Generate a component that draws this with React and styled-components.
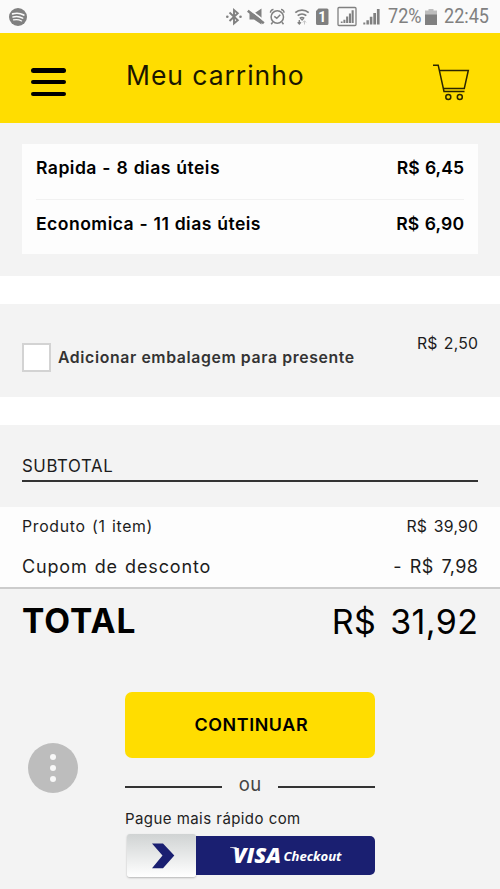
import React from 'react';
import styled, { createGlobalStyle } from 'styled-components';

const App = () => {
    return (
        <>
            <GlobalStyle />
            <Screen>
                <StatusBar />
                <Header>
                    <MenuButton aria-label="Menu">
                        <span />
                        <span />
                        <span />
                    </MenuButton>
                    <Title>Meu carrinho</Title>
                    <CartIcon />
                </Header>

                <ShippingSection>
                    <ShippingCard>
                        <ShippingRow>
                            <Text $size={17.6} $weight={600} $spacing={0.45} $word={0.6}>Rapida - 8 dias úteis</Text>
                            <Text $size={17.6} $weight={600} $spacing={0} $word={0.8}>R$ 6,45</Text>
                        </ShippingRow>
                        <ShippingRow>
                            <Text $size={17.6} $weight={600} $spacing={0.45} $word={0.5}>Economica - 11 dias úteis</Text>
                            <Text $size={17.6} $weight={600} $spacing={0.1} $word={0.8}>R$ 6,90</Text>
                        </ShippingRow>
                    </ShippingCard>
                </ShippingSection>

                <GiftSection>
                    <GiftLabel>
                        <Checkbox />
                        <Text $size={15.8} $weight={600} $spacing={0.62} $color="#333">Adicionar embalagem para presente</Text>
                    </GiftLabel>
                    <GiftPrice>
                        <Text $size={15.8} $spacing={0.2} $word={1.5} $color="#1c1c1c">R$ 2,50</Text>
                    </GiftPrice>
                </GiftSection>

                <SubtotalHead>
                    <SubtotalTitle>
                        <Text $size={16.8} $spacing={0.6} $color="#1c1c1c">SUBTOTAL</Text>
                    </SubtotalTitle>
                </SubtotalHead>
                <SubtotalList>
                    <Line>
                        <Text $size={15.8} $spacing={0.7} $word={1.2} $color="#1c1c1c">Produto (1 item)</Text>
                        <Text $size={15.8} $spacing={0.2} $word={2} $color="#1c1c1c">R$ 39,90</Text>
                    </Line>
                    <Line>
                        <Text $size={18} $spacing={0.85} $word={1.2} $color="#1c1c1c">Cupom de desconto</Text>
                        <Text $size={18} $spacing={0.4} $word={2.4} $color="#1c1c1c">- R$ 7,98</Text>
                    </Line>
                </SubtotalList>

                <Total>
                    <Text $size={33.5} $weight={700} $spacing={1}>TOTAL</Text>
                    <Text $size={34} $spacing={0.4} $word={4}>R$ 31,92</Text>
                </Total>

                <Checkout>
                    <ContinueButton>
                        <Text $size={17.9} $weight={600} $spacing={0.6}>CONTINUAR</Text>
                    </ContinueButton>
                    <Or>
                        <Text $size={18.5} $spacing={0.6} $color="#444">ou</Text>
                    </Or>
                    <Faster>
                        <Text $size={15} $spacing={0.4} $word={0.3} $color="#222">Pague mais rápido com</Text>
                    </Faster>
                    <VisaCheckout />
                </Checkout>

                <MoreButton aria-label="Mais">
                    <span />
                    <span />
                    <span />
                </MoreButton>
            </Screen>
        </>
    )
}

const StatusBar = () => (
    <StyledStatus>
        <svg width="18" height="18" viewBox="0 0 18 18">
            <circle cx="9" cy="9" r="9" fill="#808080" />
            <g fill="none" stroke="#fafafa" strokeLinecap="round">
                <path d="M3.6 5.9c3.8-1.1 7.8-.7 11.2 1.1" strokeWidth="1.7" />
                <path d="M4 9c3.3-.9 6.7-.5 9.7 1.1" strokeWidth="1.5" />
                <path d="M4.5 11.9c2.8-.7 5.6-.4 8.1 1" strokeWidth="1.2" />
            </g>
        </svg>
        <StatusIcons />
        <StatusText $width={33}>72%</StatusText>
        <Battery />
        <StatusText $width={45}>22:45</StatusText>
    </StyledStatus>
);

const StatusIcons = () => (
    <svg width="160" height="22" viewBox="225 6 160 22" fill="none" stroke="#808080">
        <path d="M230.5 12.5l8.3 7.7-3.8 3.3v-13.5l3.8 3.3-8.3 7.7" strokeWidth="1.9" />
        <g fill="#808080" stroke="none">
            <circle cx="228.3" cy="16.7" r="1.3" />
            <circle cx="241.5" cy="16.7" r="1.3" />
            <path d="M250.5 13.5h4.5l7.5-5v16l-7.5-5h-4.5z" />
        </g>
        <path d="M249 8.3l17.5 13.5" stroke="#fafafa" strokeWidth="1.8" />
        <path d="M248.8 10.7l16 12.6" strokeWidth="2.6" />
        <g strokeWidth="1.5">
            <circle cx="278.3" cy="17" r="6.2" />
            <path d="M275.3 16.3l2.5 2 3.5-3.5M271.5 12.7a3 3 0 0 1 3-3.2M282 9.5a3 3 0 0 1 3 3.2M273.7 22.3l-1.5 2M283 22.3l1.5 2" />
        </g>
        <path d="M296.3 12.7a10 10 0 0 1 13.4 0M298.7 15.7a6.5 6.5 0 0 1 8.6 0M300.8 18.5a3.5 3.5 0 0 1 4.4 0" strokeWidth="1.8" />
        <path d="M301.3 19h3.6l-1.8 2z" fill="#808080" stroke="none" />
        <path d="M300.3 20v3.5M298.7 22.3l1.6 1.8 1.6-1.8" strokeWidth="1.3" />
        <path d="M305.5 24.5v-3.5M303.9 22.5l1.6-1.8 1.6 1.8" stroke="#c4c4c4" />
        <path d="M319.5 8.5h8.5a1.5 1.5 0 0 1 1.5 1.5v13.5a1.5 1.5 0 0 1-1.5 1.5h-9.5a1.5 1.5 0 0 1-1.5-1.5V11z" fill="#808080" stroke="none" />
        <text x="323.3" y="21.8" textAnchor="middle" fill="#fff" stroke="none" fontFamily="Roboto, sans-serif" fontWeight="700" fontSize="14">1</text>
        <rect x="339" y="7.5" width="18" height="18" rx="1" strokeWidth="1.3" />
        <g fill="#808080" stroke="none">
            <path d="M341.8 21.5h1.8v1.5h-1.8zM344.4 19.7h2v3.3h-2zM347.1 16.5h2.1v6.5h-2.1zM349.9 13.5h2.1v9.5h-2.1zM352.6 10.3h2.1v12.7h-2.1z" />
            <path d="M364.3 22.5h2v2h-2zM367.4 20.2h2.5v4.3h-2.5zM370.8 16.7h2.6v7.8h-2.6zM374.3 13h2.7v11.5h-2.7zM377.9 9h2.7v15.5h-2.7z" />
        </g>
    </svg>
);

const Battery = () => (
    <svg width="12" height="16" viewBox="0 0 12 16">
        <path d="M3.5 0h5v1.5H12V6H0V1.5h3.5z" fill="#bdbdbd" />
        <path d="M0 5.5h12V16H0z" fill="#808080" />
    </svg>
);

const CartIcon = () => (
    <StyledCart width="38" height="38" viewBox="432 63 38 38" fill="none" stroke="#2b2600" strokeWidth="1.5">
        <path d="M433 65.2h5.2l5.8 26.3h20.5" />
        <path d="M439.3 70.5h29l-4 18h-20.5" />
        <circle cx="448.3" cy="97" r="2.5" />
        <circle cx="459.8" cy="97" r="2.5" />
    </StyledCart>
);

const VisaCheckout = () => (
    <VisaButton>
        <VisaArrow>
            <svg width="23" height="26" viewBox="0 0 23 26">
                <path d="M0 .5h11L22.3 12.5 11 25.2H0l10.5-12.7z" fill="#1a1f71" />
            </svg>
        </VisaArrow>
        <VisaLabel>
            <svg width="124" height="32" viewBox="0 0 124 32" fill="#fff">
                <text x="3" y="22.5" fontFamily="Open Sans, sans-serif" fontWeight="800" fontStyle="italic" fontSize="21" textLength="48" lengthAdjust="spacingAndGlyphs">VISA</text>
                <path d="M0 7.2h6.5l1.2 3.3C5.5 8.5 3 7.9 0 7.7z" />
                <text x="53.5" y="20.5" fontFamily="Open Sans, sans-serif" fontWeight="700" fontStyle="italic" fontSize="12.5" textLength="58" lengthAdjust="spacingAndGlyphs">Checkout</text>
            </svg>
        </VisaLabel>
    </VisaButton>
);

const GlobalStyle = createGlobalStyle`
    * {
        box-sizing: border-box;
    }
    body {
        margin: 0;
        background: #f3f3f3;
        font-family: 'Inter', sans-serif;
        color: #000;
    }
    button {
        border: none;
        padding: 0;
        background: none;
        font-family: inherit;
    }
`;

const Screen = styled.div`
    position: relative;
    width: 500px;
    height: 889px;
    overflow: hidden;
    background: #fff;
    display: flex;
    flex-direction: column;
`;

const Text = styled.span`
    display: block;
    white-space: nowrap;
    font-size: ${({ $size }) => $size}px;
    font-weight: ${({ $weight }) => $weight || 400};
    letter-spacing: ${({ $spacing }) => $spacing}px;
    word-spacing: ${({ $word }) => $word || 0}px;
    margin-right: ${({ $spacing }) => -$spacing}px;
    color: ${({ $color }) => $color || '#000'};
`;

const StyledStatus = styled.div`
    height: 33px;
    flex: none;
    background: #fafafa;
    display: flex;
    align-items: center;
    padding: 0 11px 0 9px;

    > svg:nth-child(2) {
        margin-left: auto;
        margin-right: 4px;
    }
    > svg:nth-child(4) {
        margin: 0 7px 0 4px;
    }
`;

const StatusText = styled.span`
    width: ${({ $width }) => $width}px;
    font-family: 'Roboto', sans-serif;
    font-size: 21px;
    line-height: 33px;
    color: #808080;
    white-space: nowrap;
    transform: scaleX(0.86);
    transform-origin: left;
`;

const Header = styled.header`
    height: 90px;
    flex: none;
    background: #ffdd00;
    display: flex;
    align-items: flex-start;
    padding: 30px 30px 0 31px;
`;

const MenuButton = styled.button`
    width: 35px;
    height: 28px;
    margin-top: 5px;
    display: flex;
    flex-direction: column;
    justify-content: space-between;

    span {
        height: 4.5px;
        border-radius: 3px;
        background: #000;
    }
`;

const Title = styled.h1`
    margin: 0 0 0 60px;
    flex: 1;
    font-size: 26.5px;
    font-weight: 400;
    line-height: 24px;
    letter-spacing: 0.95px;
    color: #1a1600;
`;

const StyledCart = styled.svg`
    flex: none;
`;

const ShippingSection = styled.section`
    height: 153px;
    flex: none;
    padding: 21px 22px 22px;
    background: #f3f3f3;
`;

const ShippingCard = styled.div`
    height: 110px;
    padding: 0 14px;
    background: #fdfdfd;
`;

const ShippingRow = styled.div`
    display: flex;
    justify-content: space-between;
    align-items: center;
    height: 55px;
    padding-bottom: 9px;

    & + & {
        height: 54px;
        padding-bottom: 7px;
        border-top: 1px solid #f1f1f1;
    }
`;

const GiftSection = styled.section`
    height: 93px;
    flex: none;
    margin-top: 28px;
    padding: 0 22px;
    background: #f3f3f3;
    display: flex;
    justify-content: space-between;
    align-items: flex-start;
`;

const GiftLabel = styled.label`
    margin-top: 39px;
    display: flex;
    align-items: center;
    gap: 7px;
`;

const Checkbox = styled.i`
    width: 29px;
    height: 29px;
    border: 2px solid #d3d3d3;
    background: #fff;
`;

const GiftPrice = styled.div`
    margin-top: 30px;
`;

const SubtotalHead = styled.div`
    height: 82px;
    flex: none;
    margin-top: 28px;
    padding: 26px 22px 0;
    background: #f3f3f3;
`;

const SubtotalTitle = styled.div`
    height: 31px;
    border-bottom: 2px solid #333;
    line-height: 31px;
`;

const SubtotalList = styled.div`
    height: 82px;
    flex: none;
    padding: 0 22px;
    background: #fdfdfd;
    border-bottom: 2px solid #ccc;
`;

const Line = styled.div`
    display: flex;
    justify-content: space-between;
    align-items: center;
    height: 39px;

    & + & {
        height: 40px;
    }
`;

const Total = styled.div`
    display: flex;
    justify-content: space-between;
    align-items: center;
    height: 103px;
    flex: none;
    padding: 0 22px 39px;
    background: #f3f3f3;
`;

const Checkout = styled.div`
    flex: 1;
    padding: 0 125px;
    background: #f3f3f3;
`;

const ContinueButton = styled.button`
    width: 250px;
    height: 66px;
    padding: 0 0 2px 2px;
    border-radius: 7px;
    background: #ffdd00;
    display: flex;
    align-items: center;
    justify-content: center;
`;

const Or = styled.div`
    display: flex;
    align-items: center;
    justify-content: space-between;
    height: 52px;

    &::before,
    &::after {
        content: '';
        width: 97px;
        height: 2px;
        margin-top: 5px;
        background: #333;
    }
`;

const Faster = styled.div`
    height: 24px;
    line-height: 18px;
`;

const VisaButton = styled.div`
    display: flex;
    align-items: flex-start;
    height: 44px;
    padding-left: 2px;
`;

const VisaArrow = styled.div`
    width: 69px;
    height: 43px;
    border-radius: 3px;
    background: linear-gradient(#d0d3d3, #fff);
    box-shadow: 0 1px 2px rgba(0, 0, 0, 0.25);
    display: flex;
    align-items: center;
    justify-content: center;
    padding-left: 4px;
`;

const VisaLabel = styled.div`
    width: 179px;
    height: 39px;
    margin-top: 2px;
    border-radius: 0 5px 5px 0;
    background: #1a1f71;
    display: flex;
    align-items: center;
    padding-left: 34px;
`;

const MoreButton = styled.button`
    position: absolute;
    left: 28px;
    top: 743px;
    width: 50px;
    height: 50px;
    border-radius: 50%;
    background: #bdbdbd;
    display: flex;
    flex-direction: column;
    align-items: center;
    justify-content: center;
    gap: 5px;

    span {
        width: 6px;
        height: 6px;
        border-radius: 50%;
        background: #f8f8f8;
    }
`;

export default App;
